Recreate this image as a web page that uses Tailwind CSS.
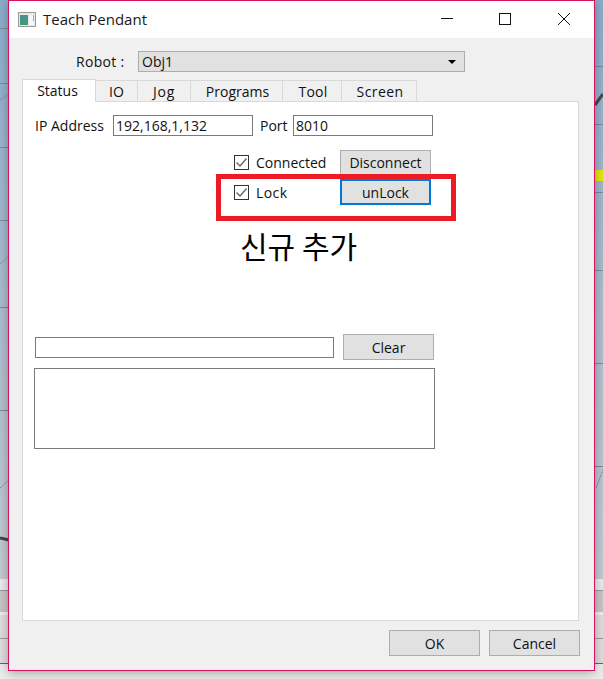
<!DOCTYPE html>
<html lang="en">
<head>
  <meta charset="UTF-8" />
  <title>Teach Pendant</title>
  <script src="https://cdn.jsdelivr.net/npm/@tailwindcss/browser@4"></script>
</head>
<body class="relative w-[603px] h-[679px] overflow-hidden bg-gradient-to-b from-[#8aadcb] via-[#aebfce] to-[#c9cfd3] font-['Open_Sans','Noto_Sans_CJK_KR',sans-serif] text-[14px] text-[#111]">
  <!-- backdrop: bits of the window behind the dialog -->
  <svg class="absolute left-0 top-0" width="603" height="679" viewBox="0 0 603 679">
    <rect x="0" y="579" width="603" height="100" fill="#dedede" />
    <rect x="0" y="579" width="603" height="11" fill="#ebebeb" />
    <rect x="0" y="590" width="603" height="22" fill="#c6c6c6" />
    <rect x="0" y="612" width="603" height="3" fill="#f0f0f0" />
    <rect x="0" y="664" width="603" height="15" fill="#ececec" />
    <g stroke="#7d8a94" fill="none">
      <path d="M0 28.5H9M0 83.5H9M0 147.5H9M0 220.5H9M0 307.5H9M0 410.5H9" />
      <path d="M595 66.5H603M595 124.5H603M595 192.5H603M595 270.5H603M595 363.5H603M595 466.5H603" />
      <path d="M0 100L9 94M0 264L9 256M0 488L9 480M596 488L603 470" stroke-dasharray="2 1" />
      <path d="M0 590.5H9M0 638.5H9M595 590.5H603M595 638.5H603" stroke="#999" />
      <path d="M0 663.5H9M595 663.5H603" stroke="#666" />
    </g>
    <path d="M0 538L9 540" stroke="#444" stroke-width="3" />
    <path d="M595 105L603 94" stroke="#4a4a4a" stroke-width="3" />
    <rect x="595" y="170" width="8" height="11" fill="#e6e610" />
  </svg>

  <!-- window -->
  <div class="absolute left-[8px] top-0 w-[587px] h-[671px] flex flex-col border border-[#d8115f] bg-[#f0f0f0] shadow-[0_2px_10px_rgba(0,0,0,0.3)]">
    <!-- title bar -->
    <div class="h-[37px] shrink-0 bg-white flex items-center">
      <svg class="ml-[9px]" width="18" height="15" viewBox="0 0 18 15">
        <defs>
          <linearGradient id="ico" x1="0" y1="0" x2="0" y2="1">
            <stop offset="0" stop-color="#4f8f9c" />
            <stop offset="1" stop-color="#3f9a6c" />
          </linearGradient>
        </defs>
        <rect x="0.5" y="0.5" width="17" height="14" fill="#e8e8e8" stroke="#9a9a9a" />
        <rect x="2" y="3" width="8" height="10" fill="url(#ico)" />
        <rect x="11" y="3" width="5" height="10" fill="#f4f7f7" />
        <rect x="15" y="3" width="1" height="6" fill="#8fb4c4" />
      </svg>
      <span class="ml-[7px] text-[15px] text-[#1a1a1a]">Teach Pendant</span>
      <div class="ml-auto flex items-center">
        <svg width="14" height="15" viewBox="0 0 14 15" class="mr-[43px]"><path d="M1 6.5H13" stroke="#111" /></svg>
        <svg width="14" height="15" viewBox="0 0 14 15" class="mr-[46px]"><rect x="2.5" y="1.5" width="11" height="11" fill="none" stroke="#111" /></svg>
        <svg width="14" height="15" viewBox="0 0 14 15" class="mr-[23px]"><path d="M1 1L13 13M13 1L1 13" stroke="#111" /></svg>
      </div>
    </div>

    <!-- robot combo -->
    <div class="flex items-center mt-[13px] ml-[67px] h-[21px]">
      <span class="w-[62px] tracking-[0.3px]">Robot :</span>
      <div class="w-[327px] h-[21px] bg-[#e1e1e1] border border-[#adadad] flex items-center pl-[3px] pr-[8px] justify-between">
        <span>Obj1</span>
        <span class="w-0 h-0 border-x-[4px] border-x-transparent border-t-[4px] border-t-black"></span>
      </div>
    </div>

    <!-- tabs -->
    <div class="flex items-start ml-[13px] mt-[7px] h-[23px] relative z-10 text-center">
      <div class="w-[74px] h-[23px] bg-white border border-b-0 border-[#d9d9d9] pr-[3px]">Status</div>
      <div class="w-[42px] h-[21px] mt-[1px] bg-[#f0f0f0] border border-l-0 border-b-0 border-[#d9d9d9]">IO</div>
      <div class="w-[53px] h-[21px] mt-[1px] bg-[#f0f0f0] border border-l-0 border-b-0 border-[#d9d9d9] tracking-[0.8px]">Jog</div>
      <div class="w-[92px] h-[21px] mt-[1px] bg-[#f0f0f0] border border-l-0 border-b-0 border-[#d9d9d9] pl-[2px]">Programs</div>
      <div class="w-[59px] h-[21px] mt-[1px] bg-[#f0f0f0] border border-l-0 border-b-0 border-[#d9d9d9] pl-[2px] tracking-[0.2px]">Tool</div>
      <div class="w-[75px] h-[21px] mt-[1px] bg-[#f0f0f0] border border-l-0 border-b-0 border-[#d9d9d9] pl-[2px] tracking-[0.4px]">Screen</div>
    </div>

    <!-- tab pane -->
    <div class="ml-[13px] w-[557px] h-[520px] -mt-px bg-white border border-[#d9d9d9] flex flex-col">
      <div class="flex items-center mt-[13px] ml-[12px] h-[21px]">
        <span class="w-[78px]">IP Address</span>
        <div class="w-[140px] h-[21px] border border-[#7a7a7a] pl-[2px] leading-[19px]">192,168,1,132</div>
        <span class="w-[40px] pl-[7px]">Port</span>
        <div class="w-[140px] h-[21px] border border-[#7a7a7a] pl-[2px] leading-[19px]">8010</div>
      </div>

      <div class="flex items-center mt-[14px] ml-[211px] h-[25px]">
        <svg width="15" height="15" viewBox="0 0 15 15"><rect x="0.5" y="0.5" width="14" height="14" fill="#fff" stroke="#333" /><path d="M2.5 7.5L6 11L12.5 3.5" fill="none" stroke="#666" stroke-width="1.4" /></svg>
        <span class="ml-[7px] w-[84px]">Connected</span>
        <div class="w-[91px] h-[25px] bg-[#e1e1e1] border border-[#adadad] text-center leading-[23px]">Disconnect</div>
      </div>
      <div class="flex items-center mt-[4px] ml-[211px] h-[26px]">
        <svg width="15" height="15" viewBox="0 0 15 15"><rect x="0.5" y="0.5" width="14" height="14" fill="#fff" stroke="#333" /><path d="M2.5 7.5L6 11L12.5 3.5" fill="none" stroke="#666" stroke-width="1.4" /></svg>
        <span class="ml-[7px] w-[84px] tracking-[0.4px]">Lock</span>
        <div class="w-[91px] h-[26px] bg-[#e1e1e1] border-2 border-[#0078d7] text-center leading-[24px]">unLock</div>
      </div>

      <div class="ml-[217px] mt-[20px] h-[40px] text-[30px] leading-[40px] text-black font-['Noto_Sans_CJK_KR',sans-serif]">신규 추가</div>

      <div class="flex items-center mt-[69px] ml-[12px] h-[26px]">
        <div class="w-[299px] h-[21px] border border-[#7a7a7a]"></div>
        <div class="ml-[9px] w-[91px] h-[26px] bg-[#e1e1e1] border border-[#adadad] text-center leading-[26px]">Clear</div>
      </div>
      <div class="ml-[11px] mt-[8px] w-[401px] h-[81px] border border-[#7a7a7a]"></div>
    </div>

    <!-- dialog buttons -->
    <div class="flex justify-end gap-[9px] mt-[9px] pr-[14px]">
      <div class="w-[91px] h-[26px] bg-[#e1e1e1] border border-[#adadad] text-center leading-[26px]">OK</div>
      <div class="w-[91px] h-[26px] bg-[#e1e1e1] border border-[#adadad] text-center leading-[26px]">Cancel</div>
    </div>
  </div>

  <!-- red annotation box -->
  <div class="absolute left-[216px] top-[174px] w-[240px] h-[47px] border-[5px] border-[#ed1c24]"></div>
</body>
</html>
